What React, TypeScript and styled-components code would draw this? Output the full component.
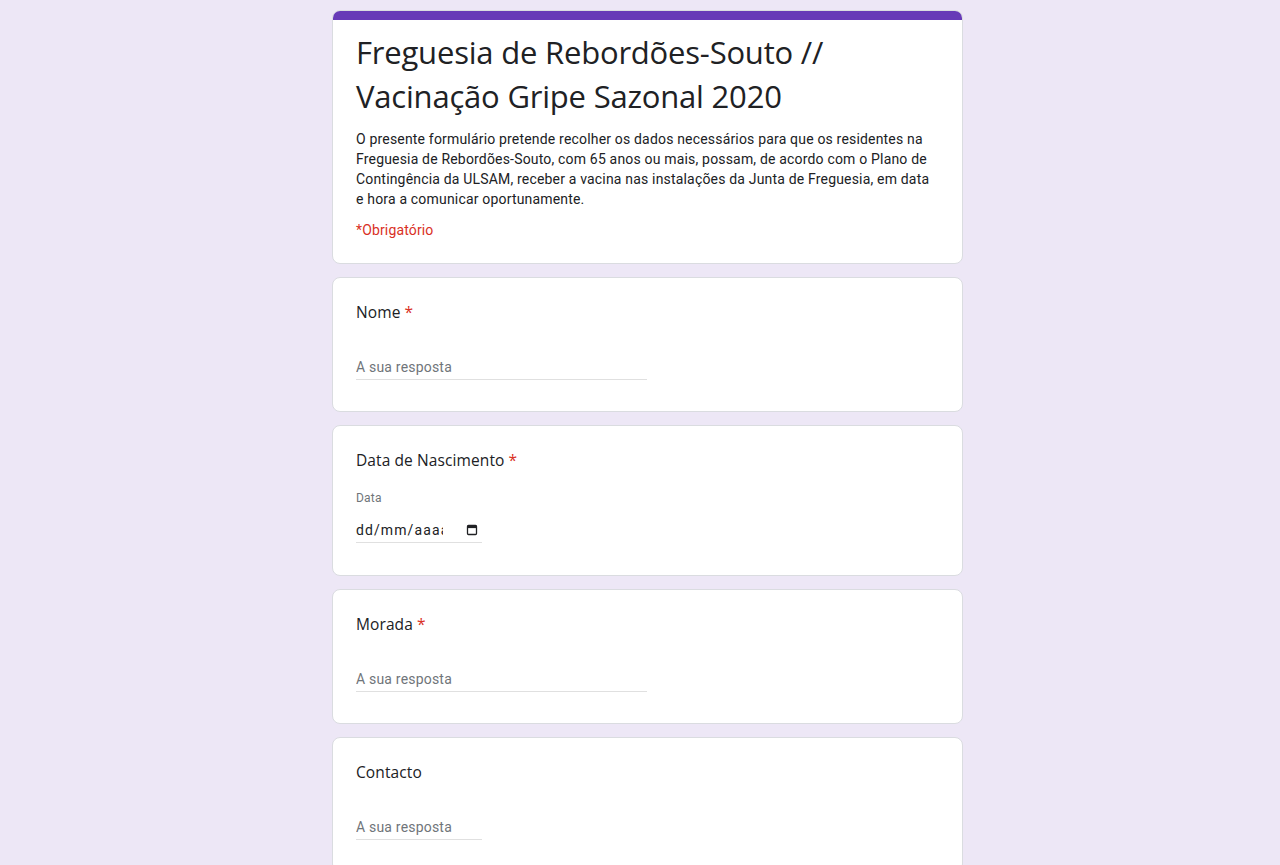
import React from "react";
import styled, { createGlobalStyle } from "styled-components";

const GlobalStyle = createGlobalStyle`
	html, body {
		margin: 0;
		padding: 0;
		background: #ede7f6;
	}
	body {
		font-family: Roboto, "Liberation Sans", Arial, sans-serif;
		color: #202124;
	}
`;

const Page = styled.div`
	min-height: 865px;
	padding: 10px 0 0 15px;
	box-sizing: border-box;
	display: flex;
	flex-direction: column;
	align-items: center;
	gap: 13px;
`;

const Card = styled.div<{ $header?: boolean }>`
	width: 631px;
	box-sizing: border-box;
	background: #fff;
	border: 1px solid #dadce0;
	border-radius: 8px;
	overflow: hidden;
	padding: ${(p) => (p.$header ? "0 0 23px" : "22px 23px 23px")};
`;

const TopBar = styled.div`
	height: 10px;
	background: #673ab7;
	margin: -1px -1px 0;
`;

const HeaderBody = styled.div`
	padding: 10px 23px 0;
`;

const Title = styled.h1`
	margin: 0;
	font-family: "Open Sans", "Noto Sans", sans-serif;
	font-weight: 400;
	font-size: 31px;
	line-height: 44px;
	letter-spacing: -0.2px;
	color: #202124;
`;

const Description = styled.p`
	margin: 11px 0 0;
	font-size: 14px;
	line-height: 20px;
	letter-spacing: 0.18px;
	color: #202124;
`;

const Required = styled.div`
	margin-top: 11px;
	font-size: 14px;
	line-height: 20px;
	letter-spacing: 0.15px;
	color: #d93025;
`;

const Question = styled.div`
	font-family: "Open Sans", "Noto Sans", sans-serif;
	font-size: 15.5px;
	line-height: 24px;
	color: #202124;
	letter-spacing: 0.1px;
`;

const Star = styled.span`
	color: #d93025;
	margin-left: 4px;
`;

const TextInput = styled.input<{ $width: number }>`
	display: block;
	margin: 31px 0 8px;
	width: ${(p) => p.$width}px;
	height: 24px;
	padding: 0;
	border: none;
	border-bottom: 1px solid #e0e0e0;
	outline: none;
	font-family: Roboto, "Liberation Sans", sans-serif;
	font-size: 14px;
	letter-spacing: 0.2px;
	color: #202124;
	background: transparent;
	box-sizing: content-box;
	&::placeholder {
		color: #70757a;
	}
`;

const DateLabel = styled.div`
	margin-top: 18px;
	font-size: 12px;
	line-height: 16px;
	letter-spacing: 0.2px;
	color: #70757a;
`;

const DateField = styled.div`
	margin: 11px 0 9px;
	width: 126px;
	height: 26px;
	border-bottom: 1px solid #e0e0e0;
	display: flex;
	align-items: center;
	justify-content: space-between;
	box-sizing: border-box;
`;

const DateText = styled.span`
	width: 87px;
	overflow: hidden;
	white-space: nowrap;
	font-size: 14px;
	color: #202124;
	letter-spacing: 1.1px;
`;

const CalendarIcon = () => (
	<svg width="12" height="12" viewBox="0 0 12 12" style={{ marginRight: 4 }}>
		<rect x="1.5" y="1.5" width="9" height="9" rx="1" fill="none" stroke="#202124" strokeWidth="1.3" />
		<rect x="1.5" y="1.5" width="9" height="2.6" fill="#202124" />
	</svg>
);

const TextQuestion: React.FC<{ label: string; required?: boolean; width: number }> = ({
	label,
	required,
	width,
}) => (
	<Card>
		<Question>
			{label}
			{required && <Star>*</Star>}
		</Question>
		<TextInput $width={width} placeholder="A sua resposta" />
	</Card>
);

export default function App() {
	return (
		<>
			<GlobalStyle />
			<Page>
				<Card $header>
					<TopBar />
					<HeaderBody>
						<Title>
							Freguesia de Rebordões-Souto //
							<br />
							Vacinação Gripe Sazonal 2020
						</Title>
						<Description>
							O presente formulário pretende recolher os dados necessários para que os residentes na
							Freguesia de Rebordões-Souto, com 65 anos ou mais, possam, de acordo com o Plano de
							Contingência da ULSAM, receber a vacina nas instalações da Junta de Freguesia, em data
							e hora a comunicar oportunamente.
						</Description>
						<Required>*Obrigatório</Required>
					</HeaderBody>
				</Card>

				<TextQuestion label="Nome" required width={291} />

				<Card>
					<Question>
						Data de Nascimento<Star>*</Star>
					</Question>
					<DateLabel>Data</DateLabel>
					<DateField>
						<DateText>dd/mm/aaaa</DateText>
						<CalendarIcon />
					</DateField>
				</Card>

				<TextQuestion label="Morada" required width={291} />

				<TextQuestion label="Contacto" width={126} />
			</Page>
		</>
	);
}
